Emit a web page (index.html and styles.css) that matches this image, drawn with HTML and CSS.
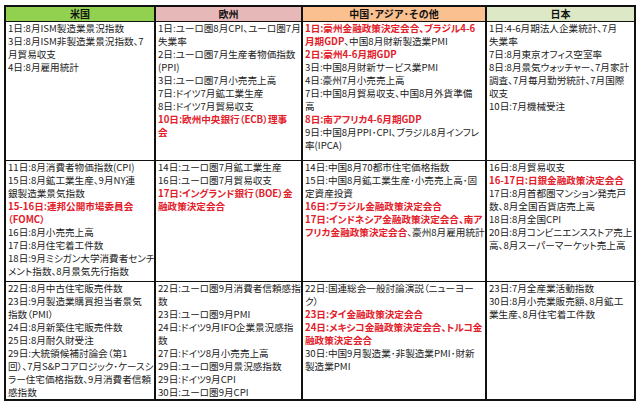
FILE: index.html
```html
<!DOCTYPE html>
<html lang="ja">
<head>
<meta charset="utf-8">
<title>経済指標カレンダー</title>
<link rel="stylesheet" href="styles.css">
</head>
<body>
<div class="wrap">
<table class="cal">
<colgroup><col class="c1"><col class="c2"><col class="c3"><col class="c4"></colgroup>
<thead>
<tr>
<th class="h-us">米国</th>
<th class="h-eu">欧州</th>
<th class="h-as">中国･アジア･その他</th>
<th class="h-jp">日本</th>
</tr>
</thead>
<tbody>
<tr class="r1">
<td>
<div class="ev">1日:8月ISM製造業景況指数</div>
<div class="ev">3日:8月ISM非製造業景況指数、7<br>月貿易収支</div>
<div class="ev">4日:8月雇用統計</div>
</td>
<td>
<div class="ev">1日:ユーロ圏8月CPI、ユーロ圏7月<br>失業率</div>
<div class="ev">2日:ユーロ圏7月生産者物価指数<br>(PPI)</div>
<div class="ev">3日:ユーロ圏7月小売売上高</div>
<div class="ev">7日:ドイツ7月鉱工業生産</div>
<div class="ev">8日:ドイツ7月貿易収支</div>
<div class="ev hl">10日:欧州中央銀行（ECB）理事<br>会</div>
</td>
<td>
<div class="ev"><span class="hl">1日:豪州金融政策決定会合、ブラジル4-6<br>月期GDP</span>、中国8月財新製造業PMI</div>
<div class="ev hl">2日:豪州4-6月期GDP</div>
<div class="ev">3日:中国8月財新サービス業PMI</div>
<div class="ev">4日:豪州7月小売売上高</div>
<div class="ev">7日:中国8月貿易収支、中国8月外貨準備<br>高</div>
<div class="ev hl">8日:南アフリカ4-6月期GDP</div>
<div class="ev">9日:中国8月PPI･CPI、ブラジル8月インフレ<br>率(IPCA)</div>
</td>
<td>
<div class="ev">1日:4-6月期法人企業統計、7月<br>失業率</div>
<div class="ev">7日:8月東京オフィス空室率</div>
<div class="ev">8日:8月景気ウォッチャー、7月家計<br>調査、7月毎月勤労統計、7月国際<br>収支</div>
<div class="ev">10日:7月機械受注</div>
</td>
</tr>
<tr class="r2">
<td>
<div class="ev">11日:8月消費者物価指数(CPI)</div>
<div class="ev">15日:8月鉱工業生産、9月NY連<br>銀製造業景気指数</div>
<div class="ev hl">15-16日:連邦公開市場委員会<br>（FOMC）</div>
<div class="ev">16日:8月小売売上高</div>
<div class="ev">17日:8月住宅着工件数</div>
<div class="ev">18日:9月ミシガン大学消費者センチ<br>メント指数、8月景気先行指数</div>
</td>
<td>
<div class="ev">14日:ユーロ圏7月鉱工業生産</div>
<div class="ev">16日:ユーロ圏7月貿易収支</div>
<div class="ev hl">17日:イングランド銀行（BOE）金<br>融政策決定会合</div>
</td>
<td>
<div class="ev">14日:中国8月70都市住宅価格指数</div>
<div class="ev">15日:中国8月鉱工業生産･小売売上高･固<br>定資産投資</div>
<div class="ev hl">16日:ブラジル金融政策決定会合</div>
<div class="ev"><span class="hl">17日:インドネシア金融政策決定会合、南ア<br>フリカ金融政策決定会合</span>、豪州8月雇用統計</div>
</td>
<td>
<div class="ev">16日:8月貿易収支</div>
<div class="ev hl">16-17日:日銀金融政策決定会合</div>
<div class="ev">17日:8月首都圏マンション発売戸<br>数、8月全国百貨店売上高</div>
<div class="ev">18日:8月全国CPI</div>
<div class="ev">20日:8月コンビニエンスストア売上<br>高、8月スーパーマーケット売上高</div>
</td>
</tr>
<tr class="r3">
<td>
<div class="ev">22日:8月中古住宅販売件数</div>
<div class="ev">23日:9月製造業購買担当者景気<br>指数（PMI）</div>
<div class="ev">24日:8月新築住宅販売件数</div>
<div class="ev">25日:8月耐久財受注</div>
<div class="ev">29日:大統領候補討論会（第1<br>回）、7月S&amp;Pコアロジック･ケースシ<br>ラー住宅価格指数、9月消費者信頼<br>感指数</div>
</td>
<td>
<div class="ev">22日:ユーロ圏9月消費者信頼感指<br>数</div>
<div class="ev">23日:ユーロ圏9月PMI</div>
<div class="ev">24日:ドイツ9月IFO企業景況感指<br>数</div>
<div class="ev">27日:ドイツ8月小売売上高</div>
<div class="ev">29日:ユーロ圏9月景況感指数</div>
<div class="ev">29日:ドイツ9月CPI</div>
<div class="ev">30日:ユーロ圏9月CPI</div>
</td>
<td>
<div class="ev">22日:国連総会一般討論演説（ニューヨー<br>ク）</div>
<div class="ev hl">23日:タイ金融政策決定会合</div>
<div class="ev hl">24日:メキシコ金融政策決定会合、トルコ金<br>融政策決定会合</div>
<div class="ev">30日:中国9月製造業･非製造業PMI･財新<br>製造業PMI</div>
</td>
<td>
<div class="ev">23日:7月全産業活動指数</div>
<div class="ev">30日:8月小売業販売額、8月鉱工<br>業生産、8月住宅着工件数</div>
</td>
</tr>
</tbody>
</table>
</div>
</body>
</html>
```

FILE: styles.css
```css
body {
  margin: 0;
  background: #ffffff;
  font-family: "Noto Sans CJK JP", "Noto Sans", sans-serif;
  font-size: 9.6px;
  color: #222222;
}

.wrap {
  padding: 5px 0 0 4px;
}

.cal {
  border-collapse: collapse;
  table-layout: fixed;
  width: 630px;
  border: 2px solid #111111;
}

.c1 { width: 150px; }
.c2 { width: 147px; }
.c3 { width: 184px; }
.c4 { width: 149px; }

.cal th {
  height: 14px;
  padding: 0;
  font-weight: bold;
  font-size: 10px;
  text-align: center;
  line-height: 14px;
  color: #111111;
  border-left: 2px solid #111111;
  border-right: 2px solid #111111;
  border-bottom: 1px solid #111111;
}

.h-us { background: #92d050; }
.h-eu { background: #e6b8b7; }
.h-as { background: #fac090; }
.h-jp { background: #dde8c6; }

.cal td {
  vertical-align: top;
  padding: 0 2px;
  line-height: 13px;
  white-space: nowrap;
  overflow: hidden;
  font-feature-settings: "palt" 1;
  border-left: 2px solid #111111;
  border-right: 2px solid #111111;
  border-top: 1px solid #111111;
  border-bottom: 1px solid #111111;
}

.r1 td { height: 138px; }
.r2 td { height: 120px; }
.r3 td { height: 117px; }

.hl {
  color: #e3202a;
  font-weight: bold;
}
```
